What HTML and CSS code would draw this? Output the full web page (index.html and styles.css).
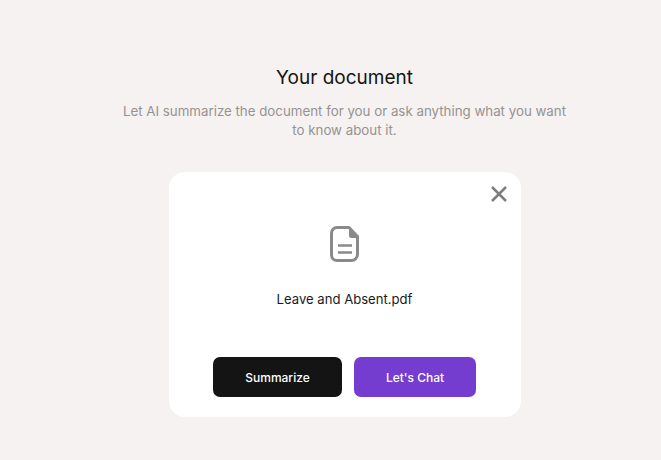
FILE: index.html
```html
<!DOCTYPE html>
<html lang="en">
<head>
<meta charset="utf-8">
<title>Your document</title>
<link rel="stylesheet" href="styles.css">
</head>
<body>
<main class="page">
  <h1 class="title">Your document</h1>
  <p class="subtitle">Let AI summarize the document for you or ask anything what you want to know about it.</p>
  <section class="card">
    <button class="close" aria-label="Close">
      <svg width="16" height="16" viewBox="0 0 16 16" fill="none" stroke="#7d7d7d" stroke-width="2.5"><path d="M1 1L15 15M15 1L1 15"/></svg>
    </button>
    <svg class="file-icon" width="30" height="36" viewBox="0 0 30 36" fill="none">
      <path d="M7 1.5H19L27.5 10.5V28.5A6 6 0 0 1 21.5 34.5H7A5.5 5.5 0 0 1 1.5 29V7A5.5 5.5 0 0 1 7 1.5Z" stroke="#8a8a8a" stroke-width="3" stroke-linejoin="round"/>
      <path d="M19 1L28.5 10.5V12H21.5A2.5 2.5 0 0 1 19 9.5Z" fill="#8a8a8a"/>
      <path d="M8 19.5H22M8 26.5H22" stroke="#8a8a8a" stroke-width="2.6"/>
    </svg>
    <p class="filename">Leave and Absent.pdf</p>
    <div class="actions">
      <button class="btn btn-dark">Summarize</button>
      <button class="btn btn-purple">Let's Chat</button>
    </div>
  </section>
</main>
</body>
</html>
```

FILE: styles.css
```css
* { box-sizing: border-box; }
html, body { margin: 0; height: 100%; }
body {
  background: #f5f2f1;
  font-family: Inter, "Noto Sans", sans-serif;
  overflow: hidden;
}
.page {
  display: flex;
  flex-direction: column;
  align-items: center;
  padding-top: 65px;
  padding-left: 28px;
}
.title {
  margin: 0;
  font-size: 19px;
  line-height: 25px;
  font-weight: 400;
  color: #141414;
}
.subtitle {
  margin: 12px 0 0;
  width: 450px;
  font-size: 13.3px;
  line-height: 19px;
  color: #959292;
  text-align: center;
}
.card {
  position: relative;
  margin-top: 32px;
  width: 352px;
  height: 245px;
  background: #fff;
  border-radius: 16px;
  display: flex;
  flex-direction: column;
  align-items: center;
  padding-top: 54px;
}
.close {
  position: absolute;
  top: 14px;
  right: 14px;
  padding: 0;
  border: 0;
  background: none;
  display: flex;
}
.file-icon { display: block; }
.filename {
  margin: 28px 0 0;
  font-size: 13.1px;
  line-height: 18px;
  color: #1a1a1a;
}
.actions {
  display: flex;
  gap: 12px;
  margin-top: 49px;
}
.btn {
  height: 40px;
  border: 0;
  border-radius: 7px;
  color: #fff;
  font-family: inherit;
  font-size: 12px;
  font-weight: 500;
}
.btn-dark { width: 129px; background: #141414; }
.btn-purple { width: 122px; background: #753cd0; }
```
